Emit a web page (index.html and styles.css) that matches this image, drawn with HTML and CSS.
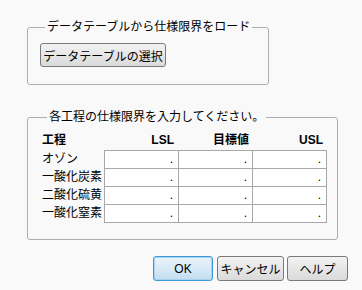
FILE: index.html
```html
<!DOCTYPE html>
<html lang="ja">
<head>
    <meta charset="UTF-8">
    <title>仕様限界</title>
    <link rel="stylesheet" href="styles.css">
</head>
<body>
    <!-- データテーブルから読み込み -->
    <fieldset class="grp grp-load">
        <legend>データテーブルから仕様限界をロード</legend>
        <button class="btn btn-pick">データテーブルの選択</button>
    </fieldset>

    <!-- 仕様限界の入力 -->
    <fieldset class="grp grp-spec">
        <legend>各工程の仕様限界を入力してください。</legend>
        <div class="spec">
            <div class="hd lbl">工程</div>
            <div class="hd">LSL</div>
            <div class="hd hd-mid">目標値</div>
            <div class="hd">USL</div>

            <div class="lbl">オゾン</div>
            <div class="cell">.</div>
            <div class="cell">.</div>
            <div class="cell last">.</div>

            <div class="lbl">一酸化炭素</div>
            <div class="cell">.</div>
            <div class="cell">.</div>
            <div class="cell last">.</div>

            <div class="lbl">二酸化硫黄</div>
            <div class="cell">.</div>
            <div class="cell">.</div>
            <div class="cell last">.</div>

            <div class="lbl">一酸化窒素</div>
            <div class="cell bottom">.</div>
            <div class="cell bottom">.</div>
            <div class="cell bottom last">.</div>
        </div>
    </fieldset>

    <!-- 下のボタン -->
    <div class="actions">
        <button class="btn btn-ok">OK</button>
        <button class="btn btn-cancel">キャンセル</button>
        <button class="btn btn-help">ヘルプ</button>
    </div>
</body>
</html>
```

FILE: styles.css
```css
:root{
    --line: #adadad;
    --cell-line: #a8a8a8;
}
body{
    margin: 0;
    padding-top: 20px;
    background-color: #f9f9f9;
    font-family: "Liberation Sans", "Noto Sans CJK JP", sans-serif;
    font-size: 12px;
    color: #000;
}

/* グループ枠 */
.grp{
    box-sizing: border-box;
    margin: 0 0 0 27px;
    border: 1px solid var(--line);
    border-radius: 3px;
    padding: 0;
}
.grp>legend{
    margin-left: 5px;
    padding: 0 2px;
    line-height: 14px;
    height: 14px;
}
.grp-load{
    width: 242px;
    padding: 9px 0 17px 12px;
}
.grp-spec{
    width: 311px;
    margin-top: 25px;
    padding: 8px 0 16px 14px;
}

/* 入力表 */
.spec{
    display: grid;
    grid-template-columns: 62px 74px 74px 75px;
    grid-template-rows: 18px 18px 18px 18px 19px;
}
.spec>div{
    box-sizing: border-box;
    line-height: 17px;
    white-space: nowrap;
}
.hd{
    font-weight: bold;
    text-align: right;
    padding-right: 4px;
    line-height: 16px !important;
}
.hd-mid{
    padding-right: 3px;
}
.lbl{
    line-height: 18px !important;
}
.hd.lbl{
    text-align: left;
    line-height: 16px !important;
}
.cell{
    background-color: #fff;
    border-left: 1px solid var(--cell-line);
    border-top: 1px solid var(--cell-line);
    text-align: right;
    padding-right: 5px;
}
.cell.last{
    border-right: 1px solid var(--cell-line);
}
.cell.bottom{
    border-bottom: 1px solid var(--cell-line);
}

/* ボタン */
.btn{
    box-sizing: border-box;
    margin: 0;
    height: 24px;
    padding: 0;
    font-family: "Liberation Sans", "Noto Sans CJK JP", sans-serif;
    font-size: 12px;
    color: #000;
    border: 1px solid #7a7a7a;
    border-radius: 3px;
    background: linear-gradient(#f3f3f3, #e6e6e6 50%, #dadada);
}
.btn-pick{
    width: 126px;
}
.actions{
    display: flex;
    justify-content: flex-end;
    gap: 4px;
    margin-top: 16px;
    padding-right: 14px;
}
.btn-ok{
    width: 60px;
    height: 25px;
    border: 1px solid #3d9ad8;
    background: linear-gradient(#eaf4fb, #d8eaf7 50%, #c3dcef);
    box-shadow: inset 0 0 0 1px #a9d3f1;
}
.btn-cancel{
    width: 67px;
    height: 25px;
}
.btn-help{
    width: 61px;
    height: 25px;
    margin-left: -1px;
}
```
